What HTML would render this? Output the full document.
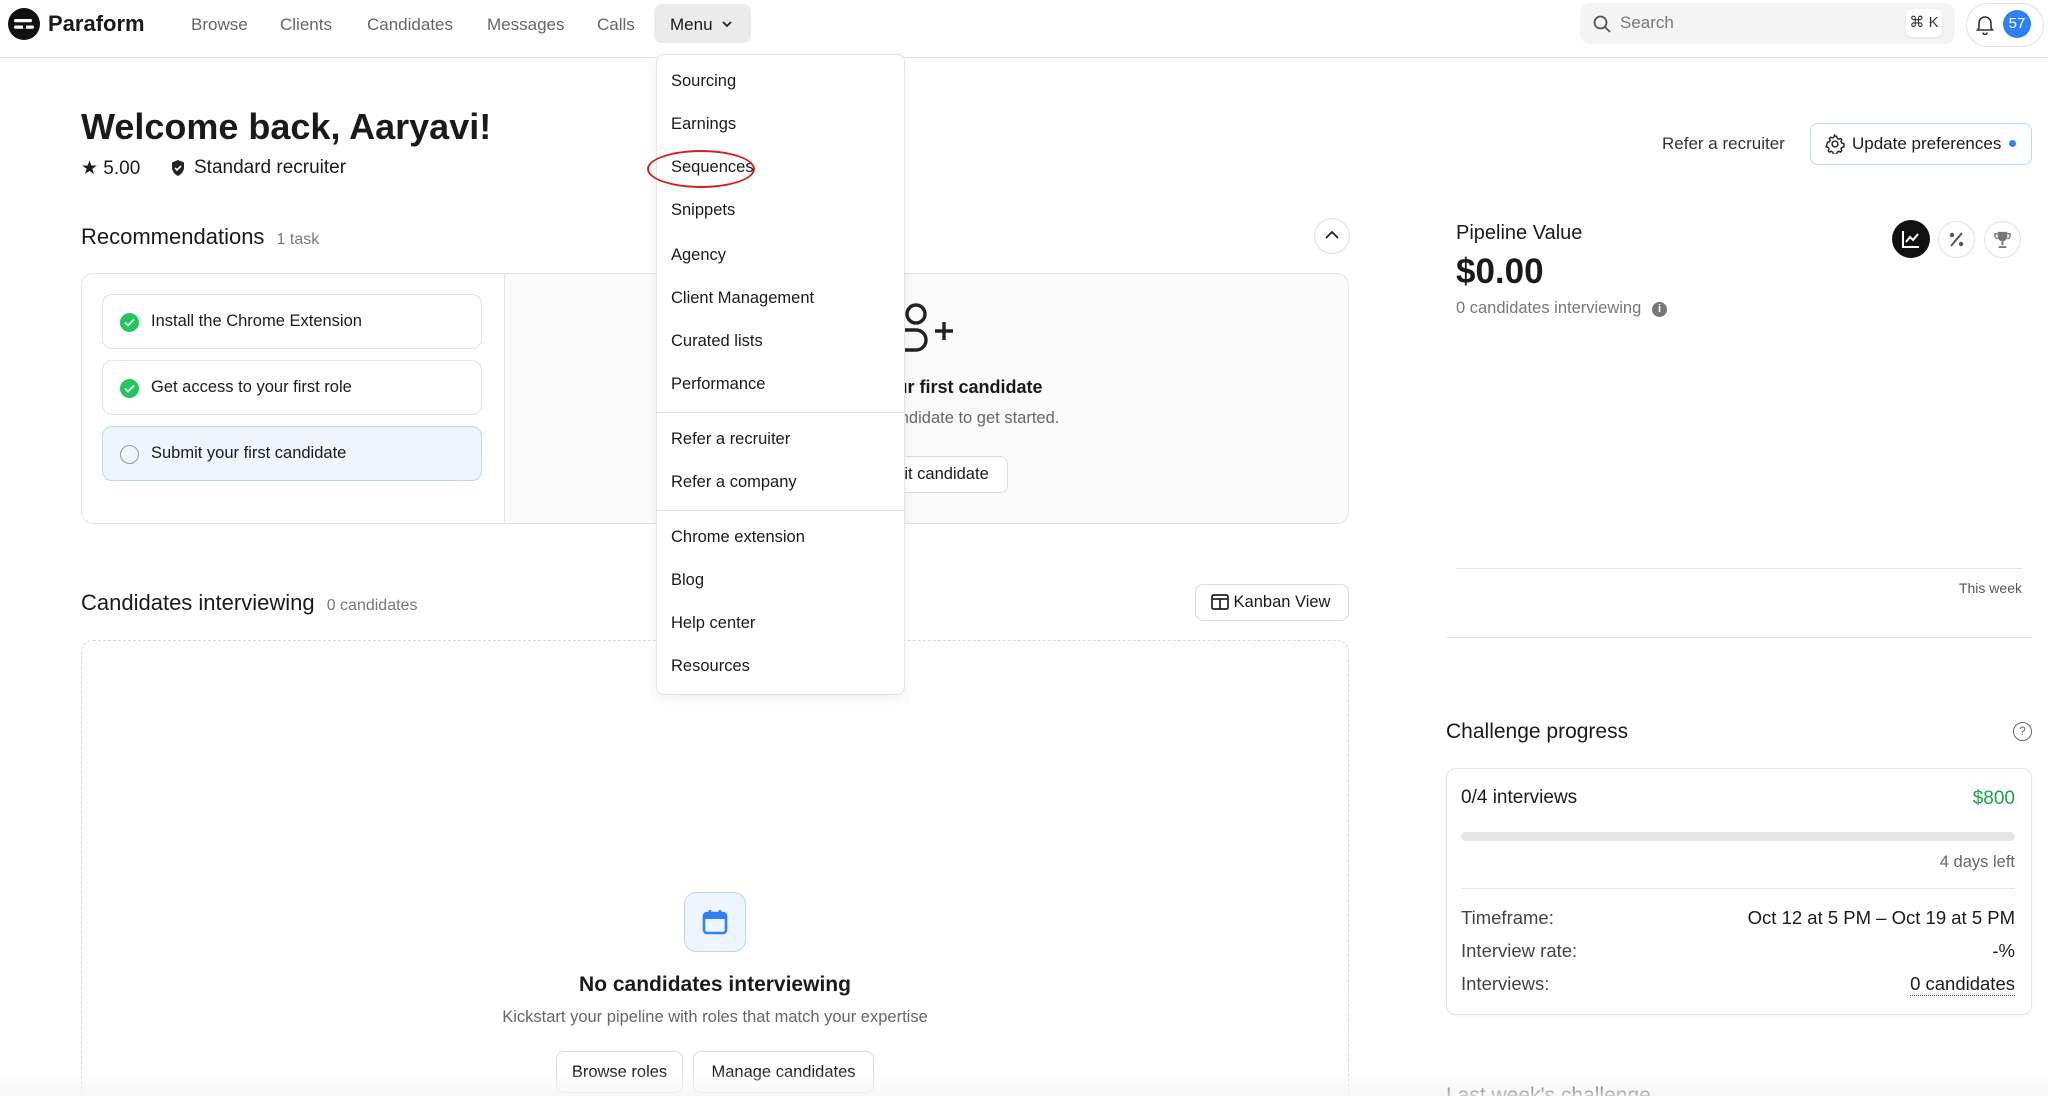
<!DOCTYPE html>
<html style="height:1096px;overflow:hidden"><head><meta charset="utf-8"><style>
*{box-sizing:border-box;margin:0;padding:0}
body{width:2048px;height:1096px;overflow:hidden;background:#fff;font-family:"Liberation Sans",sans-serif;color:#1a1a1a;position:relative}
.a{position:absolute}
.nav{position:absolute;left:0;top:0;width:2048px;height:58px;border-bottom:1px solid #e8e8e8}
.ni{position:absolute;top:15px;font-size:17px;color:#666}
.dd{position:absolute;left:656px;top:54px;width:249px;height:641px;background:#fff;border:1px solid #e4e4e4;border-radius:8px;box-shadow:0 4px 12px rgba(0,0,0,.06);z-index:5}
.di{position:absolute;left:14px;font-size:16.5px;color:#1a1a1a}
.sep{position:absolute;left:0;width:247px;height:1px;background:#e6e6e6}
.task{position:absolute;left:102px;width:380px;height:55px;border:1px solid #e3e3e3;border-radius:10px;background:#fff;font-size:16.5px}
.task span{position:absolute;left:48px;top:17px}
.chk{position:absolute;left:17px;top:18px;width:19px;height:19px;border-radius:50%;background:#22c55e}
.btn{position:absolute;border:1px solid #dcdcdc;border-radius:8px;background:#fff;font-size:16.5px;text-align:center}
.row{position:absolute;left:1461px;width:554px;font-size:18.5px}
</style></head><body>
<div class="nav">
<svg class="a" style="left:8px;top:8px" width="32" height="32" viewBox="0 0 32 32"><circle cx="16" cy="16" r="16" fill="#111"/><rect x="6" y="11" width="18" height="3.2" rx="1.6" fill="#fff"/><rect x="6" y="17.5" width="20" height="3.2" rx="1.6" fill="#fff"/><rect x="15" y="17.5" width="3" height="3.2" fill="#111"/></svg>
<div class="a" style="left:48px;top:11px;font-size:22px;font-weight:bold;color:#1a1a1a">Paraform</div>
<div class="ni" style="left:191px">Browse</div>
<div class="ni" style="left:280px">Clients</div>
<div class="ni" style="left:367px">Candidates</div>
<div class="ni" style="left:487px">Messages</div>
<div class="ni" style="left:597px">Calls</div>
<div class="a" style="left:654px;top:4px;width:97px;height:39px;background:#ebebeb;border-radius:8px"></div>
<div class="ni" style="left:670px;color:#1a1a1a">Menu</div>
<svg class="a" style="left:721px;top:19px" width="12" height="10" viewBox="0 0 12 10"><path d="M2 3l4 4 4-4" stroke="#222" stroke-width="1.8" fill="none"/></svg>
<div class="a" style="left:1580px;top:3px;width:375px;height:41px;background:#f4f4f4;border-radius:10px"></div>
<svg class="a" style="left:1592px;top:14px" width="20" height="20" viewBox="0 0 20 20"><circle cx="8.5" cy="8.5" r="6" stroke="#555" stroke-width="1.8" fill="none"/><path d="M13 13l5 5" stroke="#555" stroke-width="1.8"/></svg>
<div class="a" style="left:1620px;top:13px;font-size:17px;color:#777">Search</div>
<div class="a" style="left:1906px;top:9px;width:36px;height:28px;background:#fff;border-radius:6px;box-shadow:0 1px 2px rgba(0,0,0,.1);font-size:15px;text-align:center;line-height:28px;color:#333">⌘ K</div>
<div class="a" style="left:1966px;top:3px;width:78px;height:44px;border:1px solid #e3e3e3;border-radius:22px"></div>
<svg class="a" style="left:1974px;top:13px" width="22" height="22" viewBox="0 0 22 22"><path d="M5 15V10a6 6 0 0112 0v5l1.5 2h-15z" stroke="#333" stroke-width="1.6" fill="none"/><path d="M9 19.5a2 2 0 004 0" stroke="#333" stroke-width="1.6" fill="none"/></svg>
<div class="a" style="left:2003px;top:10px;width:28px;height:28px;border-radius:14px;background:#2f7ff5;color:#fff;font-size:15px;text-align:center;line-height:28px">57</div>
</div>

<div class="dd">
<div class="di" style="top:17px">Sourcing</div>
<div class="di" style="top:60px">Earnings</div>
<div class="di" style="top:103px">Sequences</div>
<div class="di" style="top:146px">Snippets</div>
<div class="di" style="top:191px">Agency</div>
<div class="di" style="top:234px">Client Management</div>
<div class="di" style="top:277px">Curated lists</div>
<div class="di" style="top:320px">Performance</div>
<div class="sep" style="top:357px"></div>
<div class="di" style="top:375px">Refer a recruiter</div>
<div class="di" style="top:418px">Refer a company</div>
<div class="sep" style="top:455px"></div>
<div class="di" style="top:473px">Chrome extension</div>
<div class="di" style="top:516px">Blog</div>
<div class="di" style="top:559px">Help center</div>
<div class="di" style="top:602px">Resources</div>
</div>
<div class="a" style="left:647px;top:150px;width:108px;height:38px;border:2.5px solid #d42020;border-radius:50%;z-index:6"></div>

<div class="a" style="left:81px;top:106px;font-size:36px;font-weight:bold">Welcome back, Aaryavi!</div>
<div class="a" style="left:81px;top:157px;font-size:19px">★ 5.00</div>
<svg class="a" style="left:170px;top:159px" width="16" height="18" viewBox="0 0 16 18"><path d="M8 1l6 2.5v5c0 4-3 7-6 8.5-3-1.5-6-4.5-6-8.5v-5z" fill="#222"/><path d="M5 9l2 2 4-4" stroke="#fff" stroke-width="1.6" fill="none"/></svg>
<div class="a" style="left:194px;top:157px;font-size:19px">Standard recruiter</div>

<div class="a" style="left:81px;top:224px;font-size:22px">Recommendations <span style="font-size:16px;color:#777;margin-left:6px">1 task</span></div>
<div class="a" style="left:1314px;top:218px;width:36px;height:36px;border:1px solid #ddd;border-radius:50%"></div>
<svg class="a" style="left:1323px;top:228px" width="18" height="14" viewBox="0 0 18 14"><path d="M3 10l6-6 6 6" stroke="#222" stroke-width="1.8" fill="none"/></svg>

<div class="a" style="left:81px;top:273px;width:1268px;height:251px;border:1px solid #e4e4e4;border-radius:12px;background:#fafafa;overflow:hidden">
<div class="a" style="left:0;top:0;width:423px;height:251px;background:#fff;border-right:1px solid #e4e4e4"></div>
</div>
<div class="task" style="top:294px"><div class="chk"></div><svg class="a" style="left:21px;top:23px" width="11" height="9"><path d="M1 4.5l3 3 6-6" stroke="#fff" stroke-width="1.8" fill="none"/></svg><span>Install the Chrome Extension</span></div>
<div class="task" style="top:360px"><div class="chk"></div><svg class="a" style="left:21px;top:23px" width="11" height="9"><path d="M1 4.5l3 3 6-6" stroke="#fff" stroke-width="1.8" fill="none"/></svg><span>Get access to your first role</span></div>
<div class="task" style="top:426px;background:#eef5fe;border-color:#bcd5f5"><div class="chk" style="background:none;border:1.5px solid #999"></div><span>Submit your first candidate</span></div>

<svg class="a" style="left:888px;top:302px" width="72" height="56" viewBox="0 0 72 56"><circle cx="28" cy="12" r="9" stroke="#222" stroke-width="3.4" fill="none"/><path d="M6 28h22a10 10 0 010 20H6" stroke="#222" stroke-width="3.4" fill="none"/><path d="M56 20v18M47 29h18" stroke="#222" stroke-width="3.4"/></svg>
<div class="a" style="left:726px;width:400px;top:377px;text-align:center;font-size:18px;font-weight:bold">Submit your first candidate</div>
<div class="a" style="left:736px;width:400px;top:409px;text-align:center;font-size:16.5px;color:#666">Submit a candidate to get started.</div>
<div class="btn" style="left:842px;top:456px;width:166px;height:37px;line-height:35px">Submit candidate</div>

<div class="a" style="left:81px;top:590px;font-size:22px">Candidates interviewing <span style="font-size:16px;color:#777;margin-left:6px">0 candidates</span></div>
<div class="btn" style="left:1195px;top:584px;width:154px;height:37px;line-height:35px;padding-left:20px">Kanban View</div>
<svg class="a" style="left:1211px;top:594px" width="18" height="16" viewBox="0 0 18 16"><rect x="1" y="1" width="16" height="14" rx="1.5" stroke="#222" stroke-width="1.7" fill="none"/><path d="M1 5h16M9 5v10" stroke="#222" stroke-width="1.7"/></svg>
<div class="a" style="left:81px;top:640px;width:1268px;height:480px;border:1.5px dashed #d6d6d6;border-radius:12px"></div>
<div class="a" style="left:684px;top:892px;width:62px;height:60px;border:1.5px solid #bcd5f5;border-radius:12px;background:#eef5fe"></div>
<svg class="a" style="left:701px;top:908px" width="28" height="28" viewBox="0 0 28 28"><rect x="3" y="5" width="22" height="20" rx="3" stroke="#2f7ff5" stroke-width="2.6" fill="none"/><rect x="3" y="5" width="22" height="6" fill="#2f7ff5"/><path d="M9 2v5M19 2v5" stroke="#2f7ff5" stroke-width="2.6"/></svg>
<div class="a" style="left:415px;width:600px;top:973px;text-align:center;font-size:21px;font-weight:bold">No candidates interviewing</div>
<div class="a" style="left:415px;width:600px;top:1008px;text-align:center;font-size:16.5px;color:#666">Kickstart your pipeline with roles that match your expertise</div>
<div class="btn" style="left:556px;top:1051px;width:127px;height:42px;line-height:40px">Browse roles</div>
<div class="btn" style="left:693px;top:1051px;width:181px;height:42px;line-height:40px">Manage candidates</div>

<div class="a" style="left:1662px;top:134px;font-size:17px;color:#333">Refer a recruiter</div>
<div class="a" style="left:1810px;top:123px;width:222px;height:42px;border:1.5px solid #bcd5f5;border-radius:8px"></div>
<svg class="a" style="left:1825px;top:134px" width="20" height="20" viewBox="0 0 24 24"><path d="M12 2.5l2 .3.6 2.4 1.8 1 2.3-.9 1.4 1.5-.9 2.3 1 1.8 2.4.6.3 2-.3 2-2.4.6-1 1.8.9 2.3-1.4 1.5-2.3-.9-1.8 1-.6 2.4-2 .3-2-.3-.6-2.4-1.8-1-2.3.9-1.4-1.5.9-2.3-1-1.8-2.4-.6L2.5 12l.3-2 2.4-.6 1-1.8-.9-2.3 1.4-1.5 2.3.9 1.8-1 .6-2.4z" stroke="#222" stroke-width="1.7" fill="none"/><circle cx="12" cy="12" r="3.5" stroke="#222" stroke-width="1.7" fill="none"/></svg>
<div class="a" style="left:1852px;top:134px;font-size:17px">Update preferences</div>
<div class="a" style="left:2009px;top:140px;width:7px;height:7px;border-radius:50%;background:#2f7ff5"></div>

<div class="a" style="left:1456px;top:222px;font-size:20px">Pipeline Value</div>
<div class="a" style="left:1456px;top:252px;font-size:35px;font-weight:bold">$0.00</div>
<div class="a" style="left:1456px;top:299px;font-size:16.5px;color:#777">0 candidates interviewing</div>
<div class="a" style="left:1652px;top:302px;width:15px;height:15px;border-radius:50%;background:#777;color:#fff;font-size:11px;text-align:center;line-height:15px;font-weight:bold">i</div>
<div class="a" style="left:1892px;top:220px;width:38px;height:38px;border-radius:50%;background:#111"></div>
<svg class="a" style="left:1900px;top:228px" width="22" height="22" viewBox="0 0 22 22"><path d="M3 3v16h16" stroke="#fff" stroke-width="2" fill="none"/><path d="M6 14l4-5 3 3 5-6" stroke="#fff" stroke-width="2" fill="none"/></svg>
<div class="a" style="left:1938px;top:221px;width:37px;height:37px;border-radius:50%;border:1px solid #e3e3e3"></div>
<svg class="a" style="left:1946px;top:229px" width="21" height="21" viewBox="0 0 21 21"><path d="M5 17L16 4" stroke="#555" stroke-width="2"/><circle cx="6" cy="6" r="2.2" fill="#555"/><circle cx="15" cy="15" r="2.2" fill="#555"/></svg>
<div class="a" style="left:1984px;top:221px;width:37px;height:37px;border-radius:50%;border:1px solid #e3e3e3"></div>
<svg class="a" style="left:1993px;top:230px" width="19" height="19" viewBox="0 0 20 20"><path d="M5 2h10v5a5 5 0 01-10 0z" fill="#777"/><path d="M5 4H2v2a3 3 0 003 3M15 4h3v2a3 3 0 01-3 3" stroke="#777" stroke-width="1.5" fill="none"/><path d="M10 12v4M6 18h8" stroke="#777" stroke-width="2"/></svg>
<div class="a" style="left:1456px;top:568px;width:566px;height:1px;background:#e2e2e2"></div>
<div class="a" style="left:1900px;top:580px;width:122px;text-align:right;font-size:14px;color:#555">This week</div>
<div class="a" style="left:1446px;top:637px;width:586px;height:1px;background:#e6e6e6"></div>

<div class="a" style="left:1446px;top:720px;font-size:21px">Challenge progress</div>
<div class="a" style="left:2013px;top:722px;width:19px;height:19px;border-radius:50%;border:1.5px solid #666;font-size:12px;text-align:center;line-height:16px;color:#666">?</div>
<div class="a" style="left:1446px;top:768px;width:586px;height:247px;border:1px solid #e4e4e4;border-radius:10px;box-shadow:0 1px 3px rgba(0,0,0,.05)"></div>
<div class="a" style="left:1461px;top:787px;font-size:19px">0/4 interviews</div>
<div class="a" style="left:1900px;top:788px;width:115px;text-align:right;font-size:19px;color:#16a34a">$800</div>
<div class="a" style="left:1461px;top:832px;width:554px;height:9px;border-radius:5px;background:#e6e6e6"></div>
<div class="a" style="left:1861px;top:853px;width:154px;text-align:right;font-size:16.5px;color:#666">4 days left</div>
<div class="a" style="left:1461px;top:888px;width:554px;height:1px;background:#e6e6e6"></div>
<div class="row" style="top:907px"><span style="color:#444">Timeframe:</span><span style="float:right">Oct 12 at 5 PM – Oct 19 at 5 PM</span></div>
<div class="row" style="top:940px"><span style="color:#444">Interview rate:</span><span style="float:right">-%</span></div>
<div class="row" style="top:973px"><span style="color:#444">Interviews:</span><span style="float:right;border-bottom:1.5px dotted #333">0 candidates</span></div>
<div class="a" style="left:1446px;top:1084px;font-size:21px">Last week's challenge</div>
<div class="a" style="left:0;top:1070px;width:2048px;height:26px;background:linear-gradient(rgba(255,255,255,0),rgba(245,245,245,.8))"></div>
</body></html>
